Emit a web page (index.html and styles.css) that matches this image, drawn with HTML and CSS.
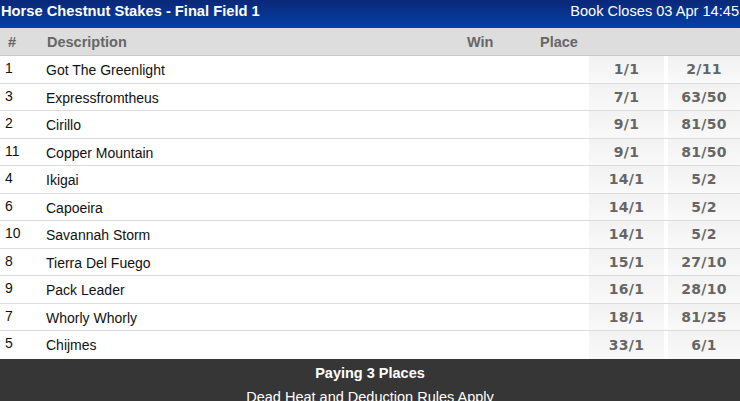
FILE: index.html
```html
<!DOCTYPE html>
<html>
<head>
<meta charset="utf-8">
<link rel="stylesheet" href="styles.css">
</head>
<body>
<div class="market">
  <div class="title-bar">
    <span class="title">Horse Chestnut Stakes - Final Field 1</span>
    <span class="closes">Book Closes 03 Apr 14:45</span>
  </div>
  <div class="col-head">
    <span class="c-num">#</span>
    <span class="c-desc">Description</span>
    <span class="c-win">Win</span>
    <span class="c-place">Place</span>
  </div>
  <div class="row"><span class="num">1</span><span class="name">Got The Greenlight</span><span class="odds">1/1</span><span class="odds">2/11</span></div>
  <div class="row"><span class="num">3</span><span class="name">Expressfromtheus</span><span class="odds">7/1</span><span class="odds">63/50</span></div>
  <div class="row"><span class="num">2</span><span class="name">Cirillo</span><span class="odds">9/1</span><span class="odds">81/50</span></div>
  <div class="row"><span class="num">11</span><span class="name">Copper Mountain</span><span class="odds">9/1</span><span class="odds">81/50</span></div>
  <div class="row"><span class="num">4</span><span class="name">Ikigai</span><span class="odds">14/1</span><span class="odds">5/2</span></div>
  <div class="row"><span class="num">6</span><span class="name">Capoeira</span><span class="odds">14/1</span><span class="odds">5/2</span></div>
  <div class="row"><span class="num">10</span><span class="name">Savannah Storm</span><span class="odds">14/1</span><span class="odds">5/2</span></div>
  <div class="row"><span class="num">8</span><span class="name">Tierra Del Fuego</span><span class="odds">15/1</span><span class="odds">27/10</span></div>
  <div class="row"><span class="num">9</span><span class="name">Pack Leader</span><span class="odds">16/1</span><span class="odds">28/10</span></div>
  <div class="row"><span class="num">7</span><span class="name">Whorly Whorly</span><span class="odds">18/1</span><span class="odds">81/25</span></div>
  <div class="row last"><span class="num">5</span><span class="name">Chijmes</span><span class="odds">33/1</span><span class="odds">6/1</span></div>
  <div class="footer">
    <div class="paying">Paying 3 Places</div>
    <div class="rules">Dead Heat and Deduction Rules Apply</div>
  </div>
</div>
</body>
</html>
```
FILE: styles.css
```css
html, body {
  margin: 0;
  padding: 0;
  background: #fff;
}
body {
  font-family: "Liberation Sans", Arial, sans-serif;
  font-size: 14px;
  color: #111;
  overflow: hidden;
}
.market {
  width: 740px;
}
.title-bar {
  height: 28px;
  display: flex;
  align-items: center;
  justify-content: space-between;
  padding: 0 1px 0 1px;
  background: linear-gradient(#0a2878, #0440a8);
  color: #fff;
  box-sizing: border-box;
}
.title {
  font-weight: bold;
  font-size: 14.7px;
  margin-top: -6px;
}
.closes {
  font-size: 14.6px;
  margin-top: -6px;
}
.col-head {
  height: 27px;
  border-bottom: 1px solid #c8c8c8;
  background: #dddddd;
  display: grid;
  grid-template-columns: 47px 420px 73px 1fr;
  align-items: center;
  color: #666;
  font-weight: bold;
  font-size: 14.5px;
}
.c-num { padding-left: 8px; }
.row {
  height: 26.5px;
  border-bottom: 1px solid #dcdcdc;
  display: grid;
  grid-template-columns: 46px 1fr 75px 72px;
  column-gap: 4px;
  align-items: stretch;
}
.row.last { border-bottom: none; height: 27.5px; }
.num {
  padding-left: 5px;
  margin-top: 4px;
}
.name {
  margin-top: 6px;
  margin-left: -4px;
}
.odds {
  display: flex;
  align-items: center;
  justify-content: center;
  background: linear-gradient(#f2f2f2, #f9f9f9);
  font-family: "DejaVu Sans", Verdana, sans-serif;
  font-weight: bold;
  font-size: 14px;
  color: #666;
  letter-spacing: 0.3px;
}
.footer {
  background: #363636;
  color: #fff;
  text-align: center;
  height: 60px;
}
.paying {
  font-weight: bold;
  padding-top: 6px;
  font-size: 14.5px;
}
.rules {
  margin-top: 8px;
  font-size: 14.5px;
}
```
